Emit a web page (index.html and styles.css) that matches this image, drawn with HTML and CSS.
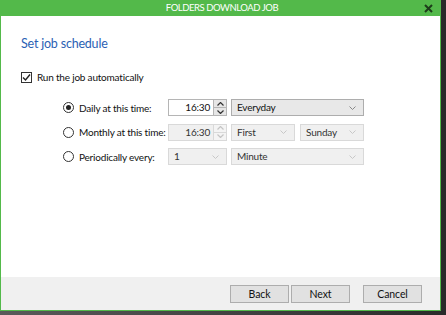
FILE: index.html
```html
<!DOCTYPE html>
<html>
<head>
<meta charset="utf-8">
<link rel="stylesheet" href="styles.css">
</head>
<body>
<div class="window">
  <div class="titlebar">
    <span></span>
    <span class="title">FOLDERS DOWNLOAD JOB</span>
    <span class="close">
      <svg width="9" height="9" viewBox="0 0 9 9"><path d="M1 1L8 8M8 1L1 8" stroke="#1d3d1a" stroke-width="2"/></svg>
    </span>
  </div>
  <div class="content">
    <h1 class="heading">Set job schedule</h1>
    <label class="check-row">
      <span class="checkbox">
        <svg width="9" height="9" viewBox="0 0 9 9"><path d="M1 4.5L3.5 7L8 1.5" fill="none" stroke="#222" stroke-width="1.4"/></svg>
      </span>
      <span>Run the job automatically</span>
    </label>
    <div class="schedule">
      <div class="opt"><span class="radio checked"></span><span>Daily at this time:</span></div>
      <div class="controls">
        <div class="spin">
          <span class="spin-text">16:30</span>
          <span class="spin-btns">
            <span class="sb"><svg width="7" height="4" viewBox="0 0 7 4"><path d="M0.5 3.5L3.5 0.5L6.5 3.5" fill="none" stroke="#333" stroke-width="1.2"/></svg></span>
            <span class="sb"><svg width="7" height="4" viewBox="0 0 7 4"><path d="M0.5 0.5L3.5 3.5L6.5 0.5" fill="none" stroke="#333" stroke-width="1.2"/></svg></span>
          </span>
        </div>
        <div class="select wide"><span>Everyday</span><span class="chev"><svg width="7" height="4" viewBox="0 0 7 4"><path d="M0.5 0.5L3.5 3.5L6.5 0.5" fill="none" stroke="#888" stroke-width="1"/></svg></span></div>
      </div>

      <div class="opt"><span class="radio"></span><span>Monthly at this time:</span></div>
      <div class="controls">
        <div class="spin disabled">
          <span class="spin-text">16:30</span>
          <span class="spin-btns">
            <span class="sb"><svg width="7" height="4" viewBox="0 0 7 4"><path d="M0.5 3.5L3.5 0.5L6.5 3.5" fill="none" stroke="#c4c4c4" stroke-width="1.2"/></svg></span>
            <span class="sb"><svg width="7" height="4" viewBox="0 0 7 4"><path d="M0.5 0.5L3.5 3.5L6.5 0.5" fill="none" stroke="#c4c4c4" stroke-width="1.2"/></svg></span>
          </span>
        </div>
        <div class="pair">
          <div class="select dis half"><span>First</span><span class="chev"><svg width="7" height="4" viewBox="0 0 7 4"><path d="M0.5 0.5L3.5 3.5L6.5 0.5" fill="none" stroke="#c8c8c8" stroke-width="1"/></svg></span></div>
          <div class="select dis half"><span>Sunday</span><span class="chev"><svg width="7" height="4" viewBox="0 0 7 4"><path d="M0.5 0.5L3.5 3.5L6.5 0.5" fill="none" stroke="#c8c8c8" stroke-width="1"/></svg></span></div>
        </div>
      </div>

      <div class="opt"><span class="radio"></span><span>Periodically every:</span></div>
      <div class="controls">
        <div class="select dis small"><span>1</span><span class="chev"><svg width="7" height="4" viewBox="0 0 7 4"><path d="M0.5 0.5L3.5 3.5L6.5 0.5" fill="none" stroke="#c8c8c8" stroke-width="1"/></svg></span></div>
        <div class="select dis wide"><span>Minute</span><span class="chev"><svg width="7" height="4" viewBox="0 0 7 4"><path d="M0.5 0.5L3.5 3.5L6.5 0.5" fill="none" stroke="#c8c8c8" stroke-width="1"/></svg></span></div>
      </div>
    </div>
  </div>
  <div class="footer">
    <button class="btn">Back</button>
    <button class="btn">Next</button>
    <button class="btn cancel">Cancel</button>
  </div>
</div>
</body>
</html>
```
FILE: styles.css
```css
html, body {
  margin: 0;
  padding: 0;
}
body {
  width: 446px;
  height: 315px;
  background: linear-gradient(to right, #5a5a5a, #2a2a2a);
  font-family: Lato, "Noto Sans", sans-serif;
  font-size: 10px;
  letter-spacing: -0.2px;
  color: #111;
  overflow: hidden;
  white-space: nowrap;
}
.window {
  width: 439px;
  height: 310px;
  border: 1px solid #53b94a;
  border-top: none;
  background: #fff;
  display: flex;
  flex-direction: column;
}
.titlebar {
  height: 16px;
  background: #53b94a;
  display: grid;
  grid-template-columns: 1fr auto 1fr;
  align-items: center;
  color: #fff;
  margin: 0 -1px;
}
.title {
  font-size: 9.5px;
  letter-spacing: -0.45px;
  line-height: 16px;
  padding-left: 3px;
}
.close {
  justify-self: end;
  display: flex;
  padding-right: 8px;
}
.content {
  flex: 1;
  padding: 19px 0 0 20px;
}
.heading {
  margin: 0;
  font-weight: normal;
  font-size: 12.5px;
  letter-spacing: -0.2px;
  line-height: 18px;
  color: #2b5fb4;
}
.check-row {
  display: flex;
  align-items: center;
  gap: 5px;
  margin-top: 17px;
  line-height: 14px;
}
.checkbox {
  flex-shrink: 0;
  width: 9px;
  height: 9px;
  border: 1px solid #333;
  display: flex;
  align-items: center;
  justify-content: center;
}
.schedule {
  display: grid;
  grid-template-columns: 105px auto;
  row-gap: 7.5px;
  margin: 15px 0 0 42px;
  align-items: center;
}
.opt {
  display: flex;
  align-items: center;
  gap: 5px;
}
.radio {
  flex-shrink: 0;
  width: 9px;
  height: 9px;
  border: 1px solid #333;
  border-radius: 50%;
  display: flex;
  align-items: center;
  justify-content: center;
}
.radio.checked::after {
  content: "";
  width: 5px;
  height: 5px;
  border-radius: 50%;
  background: #222;
}
.controls {
  display: flex;
  gap: 4px;
}
.pair {
  display: flex;
  gap: 5px;
}
.spin {
  display: flex;
  height: 17px;
}
.spin-text {
  width: 41px;
  border: 1px solid #b5b5b5;
  border-right: none;
  box-sizing: content-box;
  height: 15px;
  line-height: 15px;
  text-align: right;
  padding-right: 3px;
  background: #fff;
}
.spin.disabled .spin-text {
  background: #f0f0f0;
  border-color: #d9d9d9;
  color: #333;
}
.spin-btns {
  width: 14px;
  display: flex;
  flex-direction: column;
  border: 1px solid #b5b5b5;
  box-sizing: border-box;
}
.spin.disabled .spin-btns {
  border-color: #d9d9d9;
}
.sb {
  flex: 1;
  display: flex;
  align-items: center;
  justify-content: center;
  background: #e6e6e6;
  border-bottom: 1px solid #b5b5b5;
}
.sb:last-child {
  border-bottom: none;
}
.spin.disabled .sb {
  background: #f4f4f4;
  border-color: #d9d9d9;
}
.select {
  height: 17px;
  box-sizing: border-box;
  border: 1px solid #adadad;
  background: #e8e8e8;
  display: flex;
  align-items: center;
  justify-content: space-between;
  padding: 0 7px 0 5px;
  line-height: 15px;
}
.select.dis {
  background: #f0f0f0;
  border-color: #d9d9d9;
  color: #333;
}
.chev {
  display: flex;
}
.wide {
  width: 133px;
}
.half {
  width: 64px;
}
.small {
  width: 59px;
}
.footer {
  height: 33px;
  background: #f0f0f0;
  display: flex;
  align-items: center;
  justify-content: flex-end;
  gap: 2px;
  padding-right: 18px;
  padding-top: 1px;
  box-sizing: border-box;
}
.btn {
  width: 59px;
  height: 18px;
  border: 1px solid #adadad;
  background: #e1e1e1;
  font-family: inherit;
  font-size: 10.5px;
  letter-spacing: -0.1px;
  color: #111;
  padding: 0;
  line-height: 16px;
}
.btn.cancel {
  margin-left: 11px;
}
```
